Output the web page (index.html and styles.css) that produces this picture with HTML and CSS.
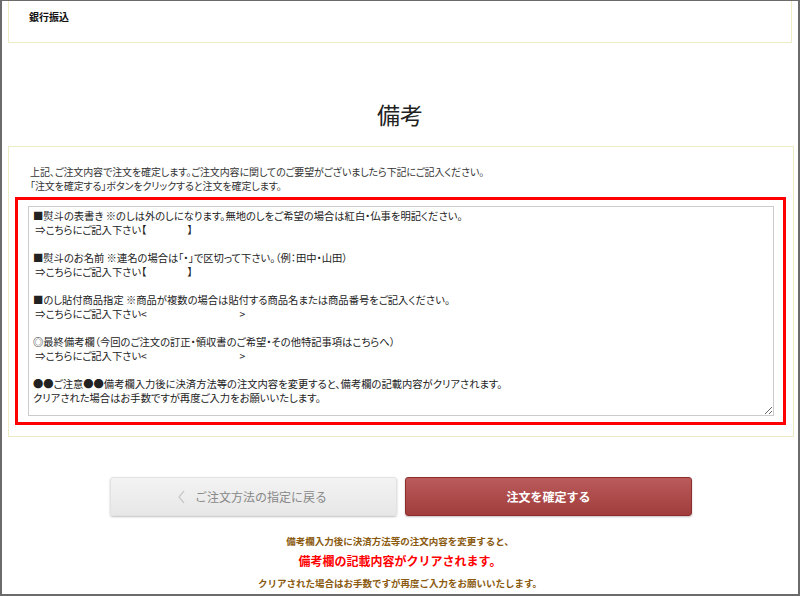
FILE: index.html
```html
<!DOCTYPE html>
<html lang="ja">
<head>
    <meta charset="UTF-8">
    <title>備考</title>
    <link rel="stylesheet" href="styles.css">
</head>
<body>
    <div class="frame">
        <div class="pay-box">
            <p class="pay-name">銀行振込</p>
        </div>

        <h2 class="section-title">備考</h2>

        <div class="note-box">
            <p class="note-lead">上記、ご注文内容で注文を確定します。ご注文内容に関してのご要望がございましたら下記にご記入ください。<br>「注文を確定する」ボタンをクリックすると注文を確定します。</p>
            <div class="note-highlight">
                <textarea class="note-input" name="remarks">■熨斗の表書き ※のしは外のしになります。無地のしをご希望の場合は紅白・仏事を明記ください。
 ⇒こちらにご記入下さい【　　　　】

■熨斗のお名前 ※連名の場合は「・」で区切って下さい。（例：田中・山田）
 ⇒こちらにご記入下さい【　　　　】

■のし貼付商品指定 ※商品が複数の場合は貼付する商品名または商品番号をご記入ください。
 ⇒こちらにご記入下さい&lt;　　　　　　　　　&gt;

◎最終備考欄（今回のご注文の訂正・領収書のご希望・その他特記事項はこちらへ）
 ⇒こちらにご記入下さい&lt;　　　　　　　　　&gt;

●●ご注意●●備考欄入力後に決済方法等の注文内容を変更すると、備考欄の記載内容がクリアされます。
クリアされた場合はお手数ですが再度ご入力をお願いいたします。</textarea>
            </div>
        </div>

        <div class="btn-row">
            <button class="btn btn-back">
                <svg class="chevron" width="7" height="14" viewBox="0 0 7 14"><polyline points="6,1 1,7 6,13" fill="none" stroke="#c8c8c8" stroke-width="1.2"/></svg>
                ご注文方法の指定に戻る
            </button>
            <button class="btn btn-confirm">注文を確定する</button>
        </div>

        <div class="caution">
            <p class="caution-sub">備考欄入力後に決済方法等の注文内容を変更すると、</p>
            <p class="caution-main">備考欄の記載内容がクリアされます。</p>
            <p class="caution-sub">クリアされた場合はお手数ですが再度ご入力をお願いいたします。</p>
        </div>
    </div>
</body>
</html>
```

FILE: styles.css
```css
body {
    margin: 0;
    font-family: "Noto Sans CJK JP", "Noto Sans", sans-serif;
    color: #333;
    background: #fff;
}
p {
    margin: 0;
}
.frame {
    width: 800px;
    height: 596px;
    box-sizing: border-box;
    border: 2px solid #6b6b6b;
    border-top-width: 1px;
    overflow: hidden;
}
.pay-box {
    margin: 0 6px;
    height: 42px;
    box-sizing: border-box;
    border: 1px solid #ebebc4;
    border-top: none;
    padding: 9px 0 0 20px;
}
.pay-name {
    font-size: 10px;
    font-weight: bold;
    line-height: 14px;
    color: #111;
}
.section-title {
    margin: 56px 0 17px;
    text-align: center;
    font-size: 23px;
    font-weight: normal;
    line-height: 30px;
    color: #222;
}
.note-box {
    margin: 0 4px 0 6px;
    border: 1px solid #ebebc4;
    padding: 18px 7px 11px 6px;
}
.note-lead {
    padding-left: 15px;
    font-size: 10px;
    line-height: 14px;
    font-feature-settings: "palt";
    letter-spacing: -0.1px;
    color: #333;
}
.note-highlight {
    margin-top: 4px;
    border: 3px solid #f00;
    padding: 6px 9px 6px 10px;
}
.note-input {
    display: block;
    width: 100%;
    height: 210px;
    box-sizing: border-box;
    border: 1px solid #ccc;
    padding: 2px 4px;
    font-family: "Noto Sans CJK JP", sans-serif;
    font-size: 10.3px;
    line-height: 14px;
    font-feature-settings: "palt";
    color: #222;
    overflow: hidden;
}
.btn-row {
    display: flex;
    justify-content: center;
    gap: 8px;
    margin-top: 40px;
    padding-left: 2px;
}
.btn {
    width: 287px;
    height: 39px;
    border-radius: 3px;
    font-family: "Noto Sans CJK JP", sans-serif;
    font-size: 12px;
    display: flex;
    align-items: center;
    justify-content: center;
    cursor: pointer;
}
.btn-back {
    background: linear-gradient(#f3f3f3, #e7e7e7);
    border: 1px solid #e2e2e2;
    box-shadow: 0 1px 2px rgba(0, 0, 0, 0.25);
    color: #888;
    gap: 10px;
    padding-right: 8px;
}
.btn-confirm {
    background: linear-gradient(#bb5b5b, #a03c3c);
    border: 1px solid #8c2c2c;
    box-shadow: 0 1px 2px rgba(0, 0, 0, 0.25);
    color: #fff;
    font-weight: bold;
}
.caution {
    margin-top: 18px;
    text-align: center;
}
.caution-sub {
    font-size: 9.5px;
    font-weight: bold;
    line-height: 14px;
    color: #8a5a10;
}
.caution-main {
    margin: 3px 0 5px;
    font-size: 12px;
    font-weight: bold;
    line-height: 20px;
    color: #f00;
}
```
